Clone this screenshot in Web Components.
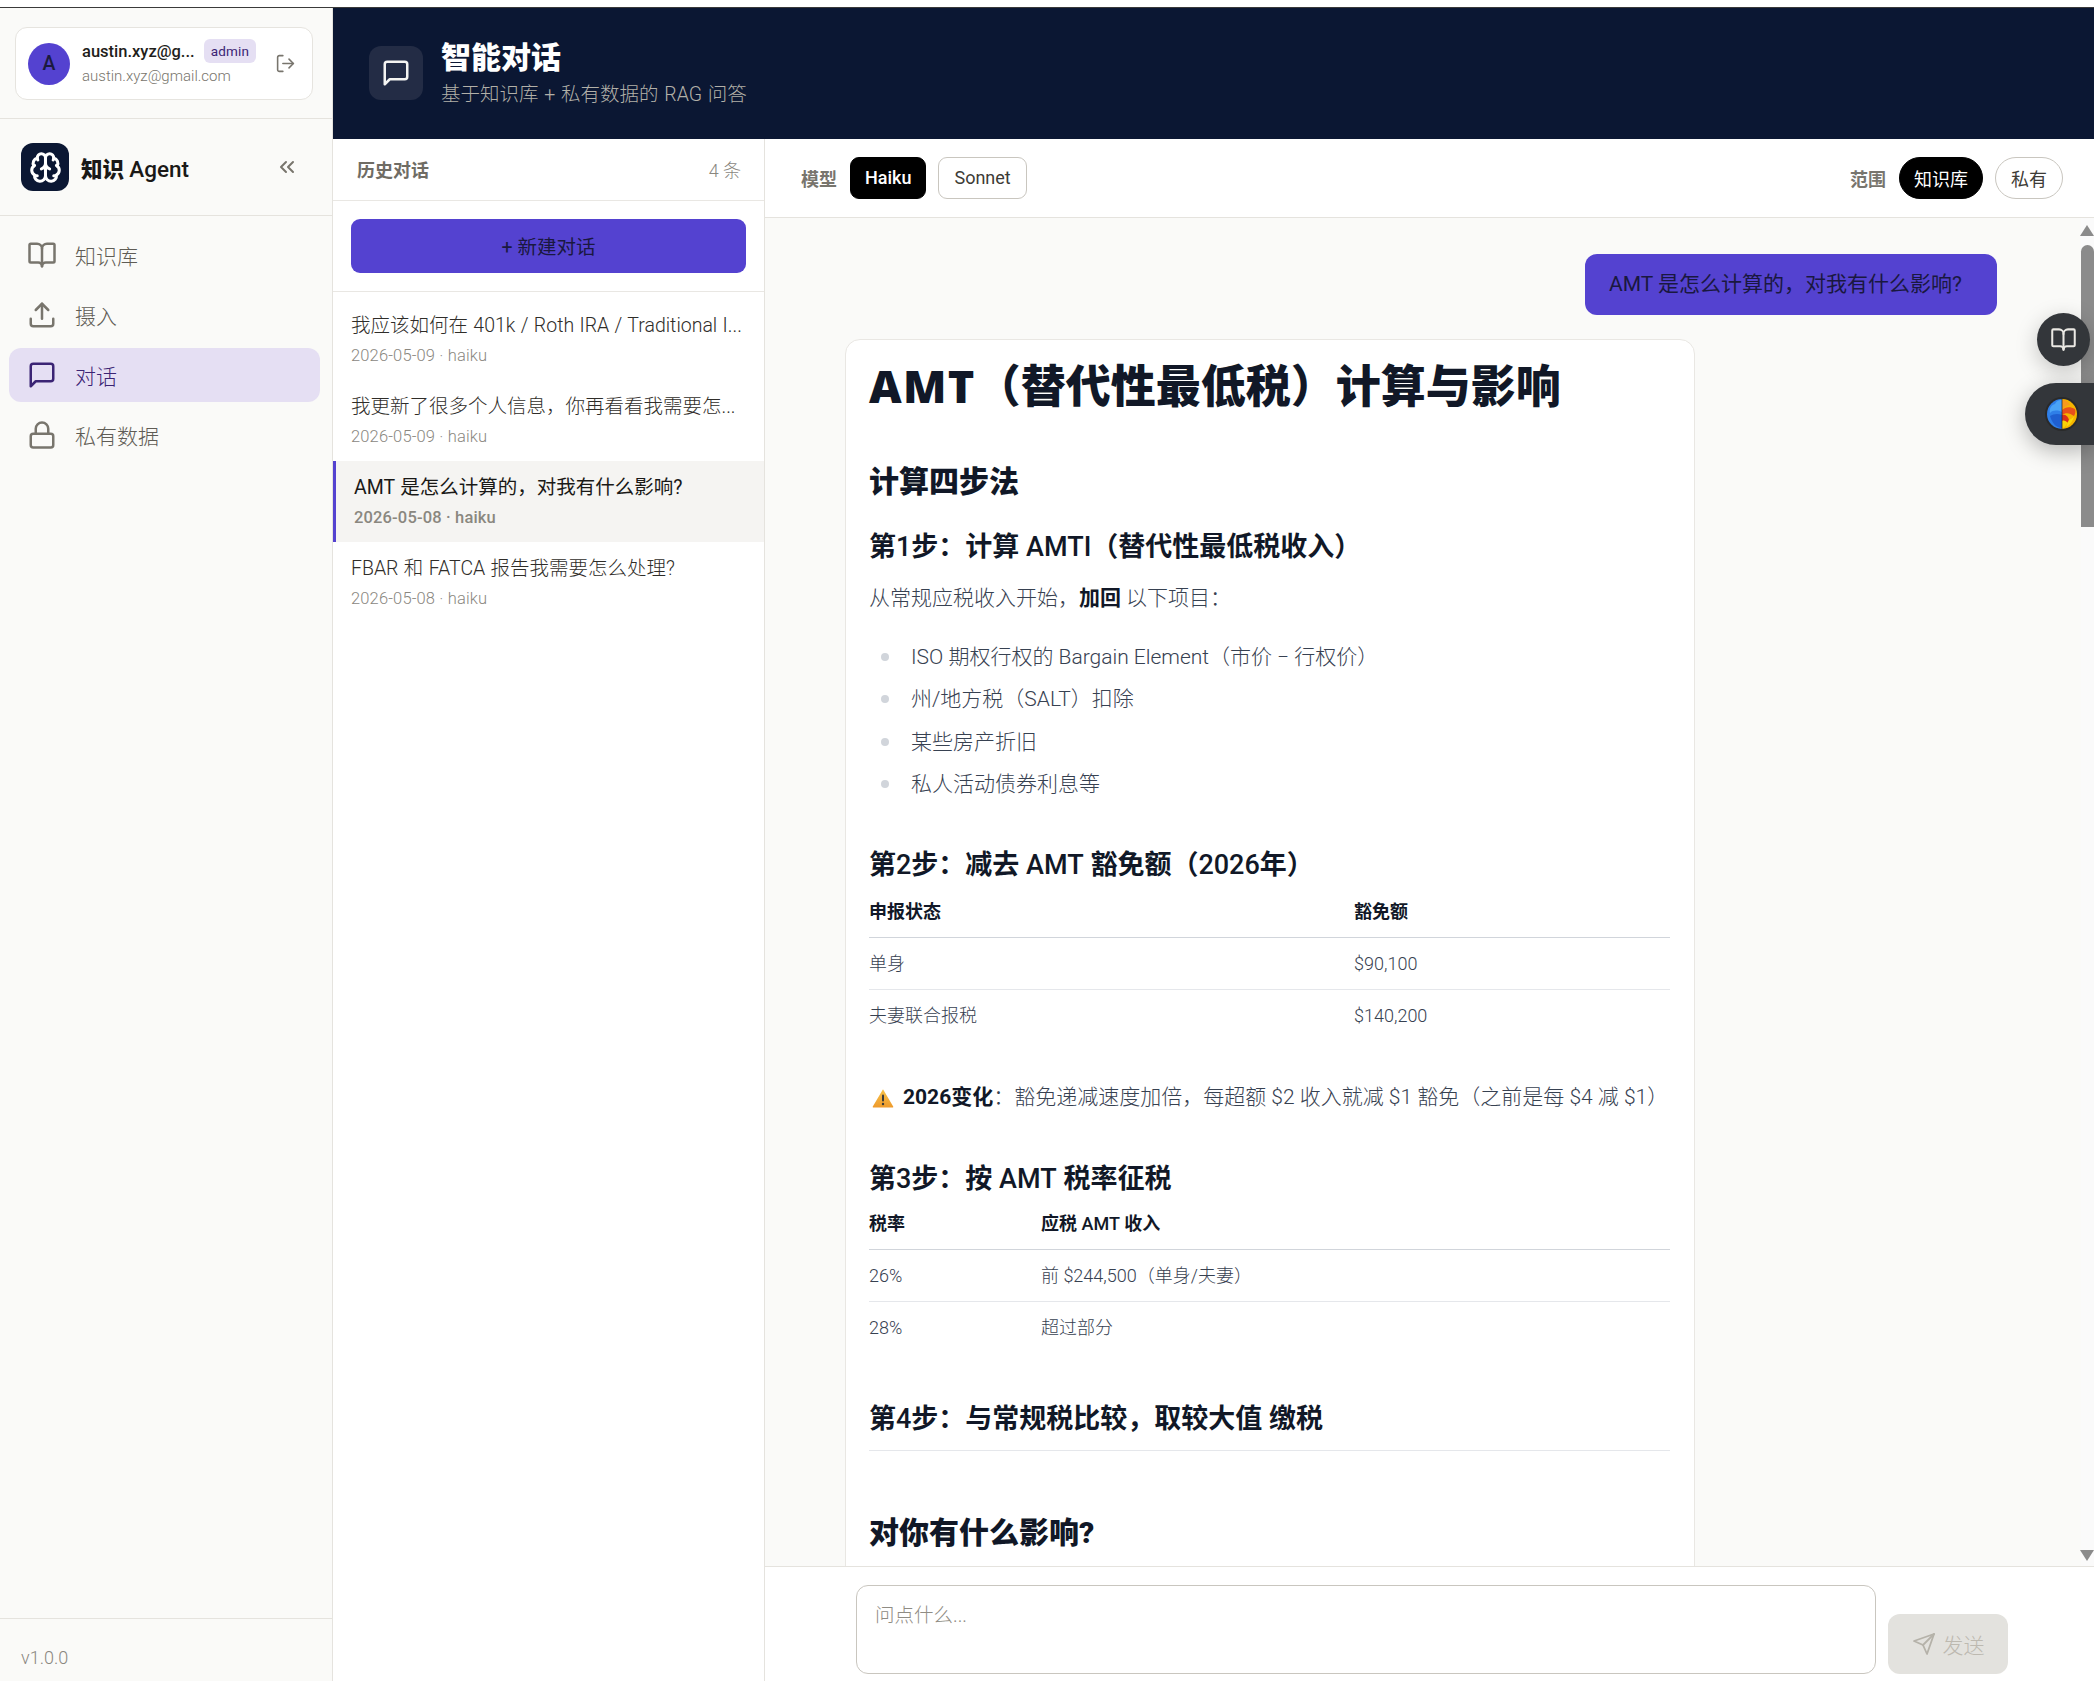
<!DOCTYPE html>
<html lang="zh-CN"><head><meta charset="utf-8"><title>智能对话</title>
<style>
html,body{margin:0;padding:0;background:#fff}
body{font-family:Roboto,"Noto Sans CJK SC",sans-serif;width:2094px;height:1681px;overflow:hidden}
</style></head><body>
<app-shell>
  <side-bar slot="side"></side-bar>
  <page-header slot="head" title-text="智能对话" sub="基于知识库 + 私有数据的 RAG 问答"></page-header>
  <history-panel slot="hist">
    <history-item t="我应该如何在 401k / Roth IRA / Traditional I..." m="2026-05-09 · haiku"></history-item>
    <history-item t="我更新了很多个人信息，你再看看我需要怎..." m="2026-05-09 · haiku"></history-item>
    <history-item active t="AMT 是怎么计算的，对我有什么影响?" m="2026-05-08 · haiku"></history-item>
    <history-item t="FBAR 和 FATCA 报告我需要怎么处理?" m="2026-05-08 · haiku"></history-item>
  </history-panel>
  <chat-toolbar slot="tool"></chat-toolbar>
  <chat-view slot="chat"></chat-view>
  <chat-composer slot="comp"></chat-composer>
</app-shell>
<script>
const ICONS={
 book:'<path d="M12 7v14"/><path d="M3 18a1 1 0 0 1-1-1V4a1 1 0 0 1 1-1h5a4 4 0 0 1 4 4 4 4 0 0 1 4-4h5a1 1 0 0 1 1 1v13a1 1 0 0 1-1 1h-6a3 3 0 0 0-3 3 3 3 0 0 0-3-3z"/>',
 upload:'<path d="M21 15v4a2 2 0 0 1-2 2H5a2 2 0 0 1-2-2v-4"/><polyline points="17 8 12 3 7 8"/><line x1="12" y1="3" x2="12" y2="15"/>',
 chat:'<path d="M21 15a2 2 0 0 1-2 2H7l-4 4V5a2 2 0 0 1 2-2h14a2 2 0 0 1 2 2z"/>',
 lock:'<rect x="3" y="11" width="18" height="11" rx="2"/><path d="M7 11V7a5 5 0 0 1 10 0v4"/>',
 logout:'<path d="M9 21H5a2 2 0 0 1-2-2V5a2 2 0 0 1 2-2h4"/><polyline points="16 17 21 12 16 7"/><line x1="21" y1="12" x2="9" y2="12"/>',
 chevrons:'<path d="m11 17-5-5 5-5"/><path d="m18 17-5-5 5-5"/>',
 send:'<path d="m22 2-7 20-4-9-9-4Z"/><path d="M22 2 11 13"/>',
 brain:'<path d="M12 5a3 3 0 1 0-5.997.125 4 4 0 0 0-2.526 5.77 4 4 0 0 0 .556 6.588A4 4 0 1 0 12 18Z"/><path d="M12 5a3 3 0 1 1 5.997.125 4 4 0 0 1 2.526 5.77 4 4 0 0 1-.556 6.588A4 4 0 1 1 12 18Z"/><path d="M15 13a4.5 4.5 0 0 1-3-4 4.5 4.5 0 0 1-3 4"/><path d="M17.599 6.5a3 3 0 0 0 .399-1.375"/><path d="M6.003 5.125A3 3 0 0 0 6.401 6.5"/><path d="M3.477 10.896a4 4 0 0 1 .585-.396"/><path d="M19.938 10.5a4 4 0 0 1 .585.396"/><path d="M6 18a4 4 0 0 1-1.967-.516"/><path d="M19.967 17.484A4 4 0 0 1 18 18"/>'
};
function def(name,css,html,init){
  customElements.define(name,class extends HTMLElement{
    constructor(){super();this.attachShadow({mode:'open'});}
    connectedCallback(){
      const h=typeof html==='function'?html(this):html;
      this.shadowRoot.innerHTML='<style>:host{box-sizing:border-box}*{box-sizing:border-box}'+css+'</style>'+h;
      if(init)init(this);
    }
  });
}
def('x-icon',':host{display:inline-flex;flex:none}svg{display:block;width:100%;height:100%}',
  el=>`<svg viewBox="0 0 24 24" fill="none" stroke="currentColor" stroke-width="${el.getAttribute('sw')||2}" stroke-linecap="round" stroke-linejoin="round">${ICONS[el.getAttribute('name')]}</svg>`);

def('app-shell',`:host{display:block;width:2094px;height:1681px}
.strip{height:8px;background:#fff;border-bottom:1px solid #3a3a3a}
.grid{display:grid;grid-template-columns:333px 432px 1fr;grid-template-rows:131px 79px 1348px 115px;height:1673px}
::slotted([slot=side]){grid-row:1/5;grid-column:1}
::slotted([slot=head]){grid-row:1;grid-column:2/4}
::slotted([slot=hist]){grid-row:2/5;grid-column:2}
::slotted([slot=tool]){grid-row:2;grid-column:3}
::slotted([slot=chat]){grid-row:3;grid-column:3}
::slotted([slot=comp]){grid-row:4;grid-column:3}`,
`<div class="strip"></div><div class="grid"><slot name="side"></slot><slot name="head"></slot><slot name="hist"></slot><slot name="tool"></slot><slot name="chat"></slot><slot name="comp"></slot></div>`);

def('user-card',`:host{display:flex;align-items:center;height:73px;width:298px;background:#fff;border:1px solid #e6e4df;border-radius:12px;padding:0 0 0 12px}
.av{width:42px;height:42px;border-radius:50%;background:#5442d0;color:#1b1a3f;font-size:19.5px;font-weight:500;display:flex;align-items:center;justify-content:center;flex:none}
.txt{margin-left:12px;width:184px}
.row{display:flex;align-items:center;height:24px}
.name{font-size:16.5px;font-weight:500;color:#1f1e1b;white-space:nowrap;width:122px}
.badge{font-size:13.5px;line-height:24px;height:24px;width:52px;text-align:center;background:#e5dff3;color:#3b2474;border-radius:6px;letter-spacing:.2px}
.mail{font-size:15px;font-weight:300;color:#78756d;line-height:24px;white-space:nowrap;margin-top:1px}
x-icon{width:21px;height:21px;color:#78756d;margin-left:9px}`,
`<div class="av">A</div><div class="txt"><div class="row"><span class="name">austin.xyz@g...</span><span class="badge">admin</span></div><div class="mail">austin.xyz@gmail.com</div></div><x-icon name="logout" sw="1.8"></x-icon>`);

def('nav-item',`:host{display:flex;align-items:center;height:54px;padding-left:18px;gap:18px;border-radius:12px;font-size:21px;font-weight:300;color:#5f5c55}
:host([active]){background:#e5dff3;color:#3b2474}
x-icon{width:30px;height:30px;color:#78756d}
:host([active]) x-icon{color:#3b2474}`,
el=>`<x-icon name="${el.getAttribute('icon')}"></x-icon><span>${el.getAttribute('label')}</span>`);

def('side-bar',`:host{display:flex;flex-direction:column;height:100%;background:#fafaf8;border-right:1px solid #e5e3de}
.u{padding:19px 0 18px 15px;border-bottom:1px solid #e5e3de}
.brand{height:97px;border-bottom:1px solid #e5e3de;display:flex;align-items:center;padding-left:21px}
.logo{width:48px;height:48px;border-radius:12px;background:#0b1733;color:#fff;display:flex;align-items:center;justify-content:center}
.logo x-icon{width:33px;height:33px}
.bt{font-size:21.5px;font-weight:900;color:#1a1917;margin-left:12px;flex:1;white-space:pre}
.bt i{font-style:normal;font-weight:500;font-size:22.5px}
.col{width:24px;height:24px;color:#78756d;margin-right:33px}
nav{display:flex;flex-direction:column;gap:6px;padding:12px 12px 0 9px;flex:1}
.foot{height:63px;border-top:1px solid #e5e3de;padding:26px 0 0 21px;font-size:18px;font-weight:300;line-height:26px;color:#8a877f}`,
`<div class="u"><user-card></user-card></div>
<div class="brand"><div class="logo"><x-icon name="brain" sw="2.2"></x-icon></div><div class="bt">知识 <i>Agent</i></div><x-icon class="col" name="chevrons"></x-icon></div>
<nav><nav-item icon="book" label="知识库"></nav-item><nav-item icon="upload" label="摄入"></nav-item><nav-item active icon="chat" label="对话"></nav-item><nav-item icon="lock" label="私有数据"></nav-item></nav>
<div class="foot">v1.0.0</div>`);

def('page-header',`:host{display:flex;align-items:center;background:#0b1733;padding-left:36px}
.ic{width:54px;height:54px;border-radius:12px;background:#232c45;color:#f4f4f2;display:flex;align-items:center;justify-content:center;margin-top:-1px}
.ic x-icon{width:30px;height:30px}
.tx{margin-left:18px;margin-top:1px}
h1{margin:0;font-size:30px;line-height:40px;font-weight:900;color:#fff}
p{margin:0;font-size:19.5px;font-weight:300;line-height:30px;color:#b2b0a8;margin-top:2px;word-spacing:1px}`,
el=>`<div class="ic"><x-icon name="chat"></x-icon></div><div class="tx"><h1>${el.getAttribute('title-text')}</h1><p>${el.getAttribute('sub')}</p></div>`);

def('history-panel',`:host{display:block;background:#fff;border-right:1px solid #e5e3de;height:100%}
.h{height:62px;border-bottom:1px solid #e9e7e3;display:flex;align-items:center;justify-content:space-between;padding:0 23px 2px 24px}
.h b{font-size:18px;font-weight:700;color:#6f6c64}
.h span{font-size:18px;font-weight:300;color:#8a877f}
.n{height:91px;border-bottom:1px solid #e9e7e3;padding:18px 18px 0 18px}
.n div{height:54px;background:#5442d0;border-radius:9px;color:#1a1840;font-size:19.5px;font-weight:400;display:flex;align-items:center;justify-content:center;padding-bottom:1px}
.l{padding-top:7px}`,
`<div class="h"><b>历史对话</b><span>4 条</span></div><div class="n"><div>+ 新建对话</div></div><div class="l"><slot></slot></div>`);

def('history-item',`:host{display:block;height:81px;padding:12px 10px 0 18px;white-space:nowrap}
:host([active]){background:#f5f4f2;border-left:3px solid #5442d0}
.t{font-size:19.5px;font-weight:300;line-height:30px;color:#2f2d29;word-spacing:.6px}
.m{font-size:16.5px;font-weight:300;line-height:24px;margin-top:3px;color:#8a877f;letter-spacing:.15px}
:host([active]) .t{color:#1a1917;font-weight:400}
:host([active]) .m{font-weight:500}`,
el=>`<div class="t">${el.getAttribute('t')}</div><div class="m">${el.getAttribute('m')}</div>`);

def('pill-btn',`:host{display:flex;align-items:center;height:42px;padding:0 14px;border:1px solid #c9c6bf;background:#fff;color:#3d3b36;font-size:18px;font-weight:400;border-radius:9px}
:host([on]){background:#000;border-color:#000;color:#fff;font-weight:500}
:host([round]){border-radius:21px}
:host([thin]){font-weight:400}
:host([wide]){padding:0 15px}`,`<slot></slot>`);

def('chat-toolbar',`:host{display:flex;align-items:center;justify-content:space-between;background:#fff;border-bottom:1px solid #e5e3de;padding:0 31px 1px 36px}
.g{display:flex;align-items:center}
.lb{font-size:18px;font-weight:700;color:#78756d;margin-right:13px}
.gap{margin-left:12px}`,
`<div class="g"><span class="lb">模型</span><pill-btn on>Haiku</pill-btn><pill-btn class="gap" wide>Sonnet</pill-btn></div>
<div class="g"><span class="lb">范围</span><pill-btn on round thin>知识库</pill-btn><pill-btn round wide class="gap">私有</pill-btn></div>`);

def('prose-card',`:host{display:block;width:850px;background:#fff;border:1px solid #e9e7e3;border-radius:15px;padding:16px 24px 40px 23px;color:#374151;font-size:21px;font-weight:300;line-height:34px}
h1,h2,h3,p,ul{margin:0}
h1{font-family:"Noto Sans","Noto Sans CJK SC",sans-serif;font-size:45px;line-height:60px;font-weight:900;color:#111827}
h1 span{letter-spacing:1.3px}
h2{font-size:30px;line-height:40px;font-weight:900;color:#111827}
h3{font-size:27px;line-height:36px;font-weight:700;color:#111827}
h3 i{font-style:normal;font-weight:500}
strong{font-weight:700;color:#111827}
ul{list-style:none;padding:0;margin-top:25px}
li{position:relative;padding-left:42px;height:34px;margin-bottom:8.3px}
li::before{content:"";position:absolute;left:12px;top:13px;width:8px;height:8px;border-radius:50%;background:#d1d5db}
table{border-collapse:collapse;width:100%;font-size:18px;table-layout:fixed}
th{font-weight:700;color:#111827;text-align:left;height:51px;border-bottom:1px solid #d1d5db;padding:0}
th span{font-weight:500}
td{height:52px;padding:0;border-bottom:1px solid #e5e7eb}
tr:last-child td{border-bottom:none}
.m44{margin-top:46px}.m26{margin-top:27px}.m17{margin-top:16px}.m46{margin-top:46px}.m47{margin-top:47px}
.warn{margin-top:38px;display:flex;align-items:center;white-space:nowrap}
.warn svg{width:22px;height:20px;margin:2px 9px 0 3px;flex:none}
hr{border:0;border-top:1px solid #e5e7eb;margin:13px 0 0}
.m64{margin-top:62px}
.t1{margin-top:4px}.t2{margin-top:2px}`,
`<h1><span>AMT</span>（替代性最低税）计算与影响</h1>
<h2 class="m44">计算四步法</h2>
<h3 class="m26">第<i>1</i>步：计算 <i>AMTI</i>（替代性最低税收入）</h3>
<p class="m17">从常规应税收入开始，<strong>加回</strong> 以下项目：</p>
<ul><li>ISO 期权行权的 Bargain Element（市价 − 行权价）</li><li>州/地方税（SALT）扣除</li><li>某些房产折旧</li><li>私人活动债券利息等</li></ul>
<h3 class="m46">第<i>2</i>步：减去 <i>AMT</i> 豁免额（<i>2026</i>年）</h3>
<table class="t1"><colgroup><col style="width:485px"><col></colgroup><thead><tr><th>申报状态</th><th>豁免额</th></tr></thead><tbody><tr><td>单身</td><td>$90,100</td></tr><tr><td>夫妻联合报税</td><td>$140,200</td></tr></tbody></table>
<p class="warn"><svg viewBox="0 0 22 20"><defs><linearGradient id="w" x1="0" y1="0" x2="0" y2="1"><stop offset="0" stop-color="#f8c34a"/><stop offset="1" stop-color="#ee9a2c"/></linearGradient></defs><path d="M11 1.2 21.2 18.4a.8.8 0 0 1-.7 1.2H1.5a.8.8 0 0 1-.7-1.2Z" fill="url(#w)"/><rect x="10" y="6.5" width="2" height="7" rx="1" fill="#3a3a3a"/><circle cx="11" cy="16" r="1.2" fill="#3a3a3a"/></svg><span><strong>2026变化</strong>：豁免递减速度加倍，每超额 $2 收入就减 $1 豁免（之前是每 $4 减 $1）</span></p>
<h3 class="m47">第<i>3</i>步：按 <i>AMT</i> 税率征税</h3>
<table class="t2"><colgroup><col style="width:172px"><col></colgroup><thead><tr><th>税率</th><th>应税 <span>AMT</span> 收入</th></tr></thead><tbody><tr><td>26%</td><td>前 $244,500（单身/夫妻）</td></tr><tr><td>28%</td><td>超过部分</td></tr></tbody></table>
<h3 class="m47">第<i>4</i>步：与常规税比较，取较大值 缴税</h3>
<hr>
<h2 class="m64">对你有什么影响?</h2>`);

def('chat-view',`:host{display:block;position:relative;overflow:hidden;background:#fafaf8;height:100%}
.inner{padding:36px 0 0 80px;width:1232px}
.me{display:flex;justify-content:flex-end;margin-bottom:24px}
.me div{height:61px;background:#5442d0;color:#1a1840;border-radius:12px;font-size:21px;font-weight:400;line-height:61px;padding:0 35px 0 24px;white-space:nowrap}
.track{position:absolute;right:0;top:0;bottom:0;width:13px;background:#fafafa}
.thumb{position:absolute;left:0;right:0;top:27px;height:282px;background:#8b8b8b;border-radius:7px 7px 0 0}
.up,.dn{position:absolute;left:-1px;width:0;height:0;border-left:7px solid transparent;border-right:7px solid transparent}
.up{top:7px;border-bottom:11px solid #8b8b8b}
.dn{bottom:5px;border-top:11px solid #8b8b8b}
.fab{position:absolute;right:4px;top:95px;width:53px;height:53px;border-radius:50%;background:#33363a;color:#ebe9e4;display:flex;align-items:center;justify-content:center;box-shadow:0 6px 22px rgba(0,0,0,.22)}
.fab x-icon{width:27px;height:27px}
.pill{position:absolute;right:0;top:165px;width:69px;height:62px;border-radius:31px 0 0 31px;background:#33363a;display:flex;align-items:center;padding-left:20px;box-shadow:0 6px 22px rgba(0,0,0,.28)}
.pill svg{width:34px;height:34px;display:block}`,
`<div class="inner"><div class="me"><div>AMT 是怎么计算的，对我有什么影响?</div></div><prose-card></prose-card></div>
<div class="track"><div class="up"></div><div class="thumb"></div><div class="dn"></div></div>
<div class="fab"><x-icon name="book" sw="1.8"></x-icon></div>
<div class="pill"><svg viewBox="0 0 34 34"><circle cx="17" cy="17" r="17" fill="#2a2a2a"/><path d="M17 2a15 15 0 0 0 0 30Z" fill="#2f7fe8"/><path d="M17 2a15 15 0 0 1 0 30Z" fill="#f5b400"/><path d="M17 3a7 7 0 0 0-7 4c-4 1-6 5-5 9 3-3 7-3 12-1Z" fill="#4aa3f5"/><path d="M17 18c-4-2-9-1-12 1 2 7 6 12 12 12Z" fill="#1f5fd0"/><path d="M17 3c3 0 6 1 8 5-3 0-6 2-8 5Z" fill="#f79a1c"/><path d="M17 13c3-3 8-4 13-1 1 3 0 5-1 7-4-3-8-4-12-1Z" fill="#e8501c"/><path d="M17 18c3-1 6 1 7 5l-3 5-4 3Z" fill="#d92f1a"/><path d="M24 23c2-1 4-2 5-4-1 5-4 9-8 11Z" fill="#fbd90a"/><path d="M17 24c2-1 4 0 6 2-2 3-4 5-6 5Z" fill="#f9d208"/><path d="M17 2v30" stroke="#20242c" stroke-width=".7"/></svg></div>`);

def('chat-composer',`:host{display:flex;align-items:flex-end;gap:12px;background:#fff;border-top:1px solid #e5e3de;padding:19px 0 7px 91px}
.in{width:1020px;height:89px;border:1px solid #c9c6bf;border-radius:12px;font-size:19.5px;font-weight:300;line-height:30px;color:#8f8c84;padding:15px 18px}
.s{width:120px;height:60px;border-radius:12px;background:#e3e2de;color:#bdb9b0;font-size:21px;font-weight:300;display:flex;align-items:center;justify-content:center;gap:7px}
.s x-icon{width:24px;height:24px;color:#b5b2a9}`,
`<div class="in">问点什么...</div><div class="s"><x-icon name="send" sw="1.8"></x-icon><span>发送</span></div>`);
</script>
</body></html>
